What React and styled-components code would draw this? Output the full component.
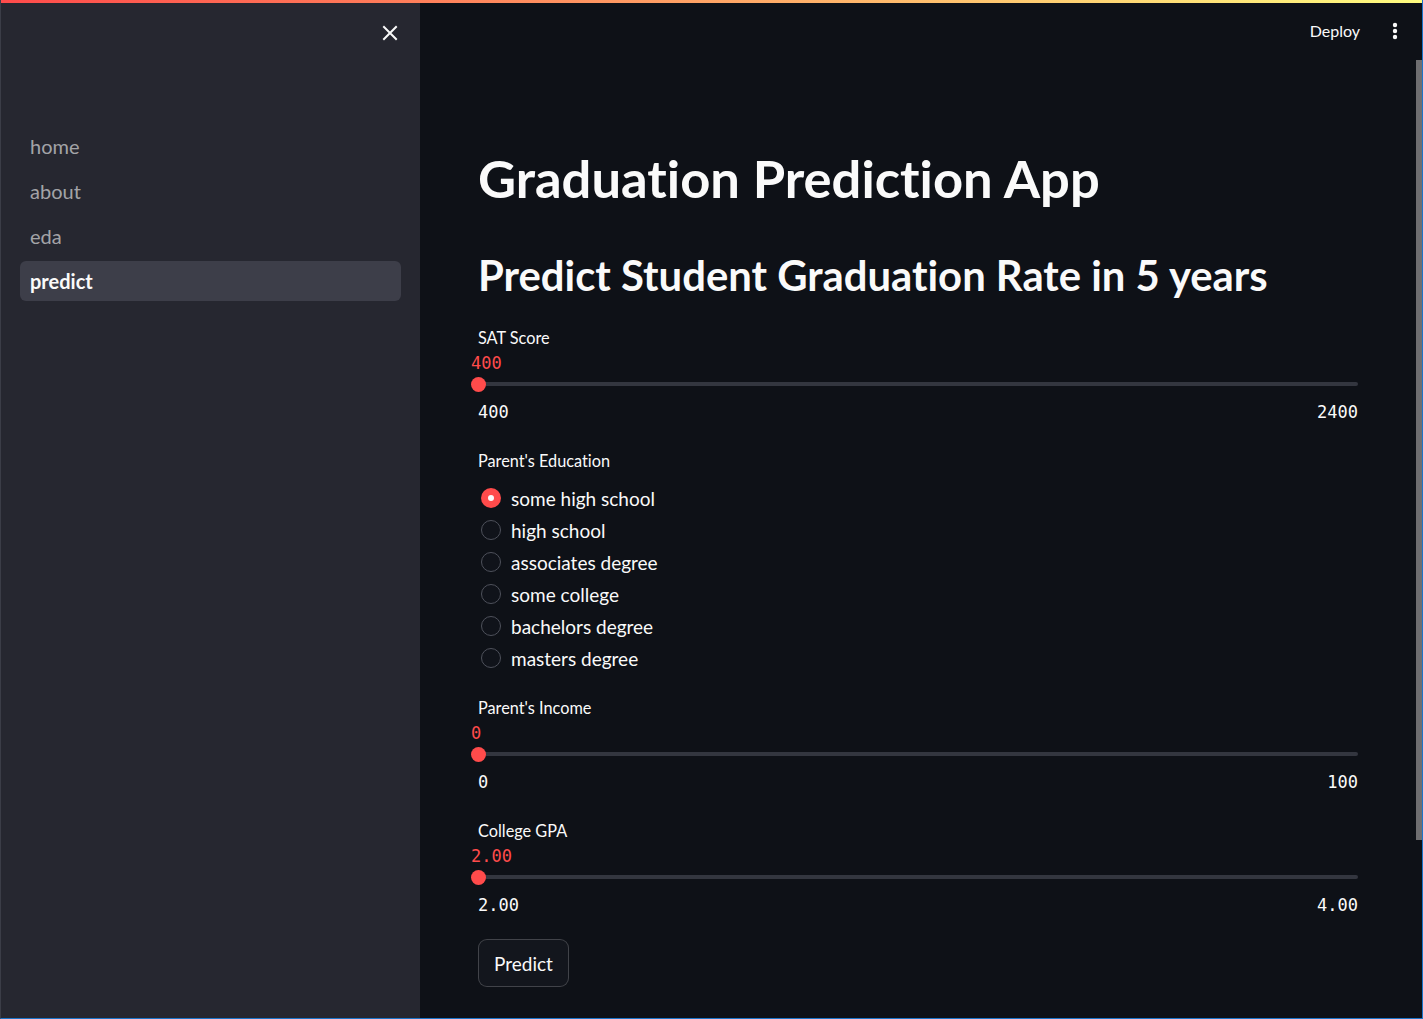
import React from 'react'
import styled, { createGlobalStyle } from 'styled-components'

const GlobalStyle = createGlobalStyle`
  html, body, #root {
    margin: 0;
    padding: 0;
    height: 100%;
  }
  body {
    background: #0e1117;
    font-family: Lato, "Noto Sans", sans-serif;
    font-variant-ligatures: none;
    color: #fafafa;
    overflow: hidden;
  }
`

const pages = ['home', 'about', 'eda', 'predict']
const educationOptions = [
  'some high school',
  'high school',
  'associates degree',
  'some college',
  'bachelors degree',
  'masters degree',
]

const CloseIcon = () => (
  <svg width="16" height="16" viewBox="0 0 16 16" fill="none">
    <path d="M2 2L14 14M14 2L2 14" stroke="#fafafa" strokeWidth="2" strokeLinecap="square" />
  </svg>
)

const KebabIcon = () => (
  <svg width="6" height="18" viewBox="0 0 6 18" fill="#fafafa">
    <circle cx="3" cy="3" r="2.2" />
    <circle cx="3" cy="9" r="2.2" />
    <circle cx="3" cy="15" r="2.2" />
  </svg>
)

const Slider = ({ label, value, min, max, spaced }) => (
  <SliderBlock $spaced={spaced}>
    <WidgetLabel>{label}</WidgetLabel>
    <ThumbValue>{value}</ThumbValue>
    <TrackArea>
      <Track />
      <Thumb />
    </TrackArea>
    <TickRow>
      <span>{min}</span>
      <span>{max}</span>
    </TickRow>
  </SliderBlock>
)

export default function App() {
  return (
    <Frame>
      <GlobalStyle />
      <Decoration />
      <Layout>
        <Sidebar>
          <SidebarHeader>
            <IconButton aria-label="close sidebar">
              <CloseIcon />
            </IconButton>
          </SidebarHeader>
          <Nav>
            {pages.map(p => (
              <NavItem key={p} $active={p === 'predict'}>{p}</NavItem>
            ))}
          </Nav>
        </Sidebar>

        <Main>
          <Header>
            <DeployButton>Deploy</DeployButton>
            <IconButton aria-label="menu">
              <KebabIcon />
            </IconButton>
          </Header>
          <Content>
            <Title>Graduation Prediction App</Title>
            <Subtitle>Predict Student Graduation Rate in 5 years</Subtitle>
            <Form>
              <Slider label="SAT Score" value="400" min="400" max="2400" spaced />
              <div>
                <WidgetLabel>Parent's Education</WidgetLabel>
                <RadioGroup>
                  {educationOptions.map((o, i) => (
                    <RadioRow key={o}>
                      <RadioCircle $checked={i === 0} />
                      <span>{o}</span>
                    </RadioRow>
                  ))}
                </RadioGroup>
              </div>
              <Slider label="Parent's Income" value="0" min="0" max="100" spaced />
              <Slider label="College GPA" value="2.00" min="2.00" max="4.00" />
              <div>
                <PredictButton>Predict</PredictButton>
              </div>
            </Form>
          </Content>
          <ScrollThumb />
        </Main>
      </Layout>
    </Frame>
  )
}

const Frame = styled.div`
  height: 1019px;
  display: flex;
  flex-direction: column;
  box-sizing: border-box;
  border-left: 1px solid #3b3d47;
  border-right: 1px solid #1b74c9;
  border-bottom: 1px solid #1b74c9;
  overflow: hidden;
`

const Decoration = styled.div`
  height: 3px;
  flex-shrink: 0;
  background: linear-gradient(90deg, #ff4b4b, #fffd80);
`

const Layout = styled.div`
  flex: 1;
  display: flex;
  min-height: 0;
`

const Sidebar = styled.aside`
  width: 419px;
  flex-shrink: 0;
  background: #262730;
  box-sizing: border-box;
  padding: 0 19px 0 19px;
`

const SidebarHeader = styled.div`
  height: 60px;
  display: flex;
  justify-content: flex-end;
  align-items: center;
  padding-right: 3px;
`

const IconButton = styled.button`
  background: none;
  border: none;
  padding: 0;
  display: flex;
  align-items: center;
  justify-content: center;
  cursor: pointer;
`

const Nav = styled.nav`
  margin-top: 63px;
  display: flex;
  flex-direction: column;
  gap: 5px;
`

const NavItem = styled.a`
  height: 40px;
  display: flex;
  align-items: center;
  padding: 0 10px 1px;
  box-sizing: border-box;
  border-radius: 6px;
  font-size: 20px;
  line-height: 38px;
  color: ${p => (p.$active ? '#fafafa' : 'rgba(250, 250, 250, 0.6)')};
  font-weight: ${p => (p.$active ? 700 : 400)};
  background: ${p => (p.$active ? '#3d3e49' : 'transparent')};
  cursor: pointer;
`

const Main = styled.main`
  flex: 1;
  position: relative;
  background: #0e1117;
  min-width: 0;
`

const Header = styled.header`
  height: 55px;
  display: flex;
  justify-content: flex-end;
  align-items: center;
  gap: 32px;
  padding-right: 24px;
`

const DeployButton = styled.button`
  background: none;
  border: none;
  color: #fafafa;
  font-family: inherit;
  font-size: 16px;
  padding: 0;
  cursor: pointer;
`

const Content = styled.div`
  width: 880px;
  margin-left: 58px;
  padding-top: 87px;
`

const Title = styled.h1`
  margin: 0;
  font-size: 52.5px;
  line-height: 66px;
  font-weight: 700;
`

const Subtitle = styled.h2`
  margin: 37px 0 0;
  font-size: 41.8px;
  line-height: 54px;
  font-weight: 700;
`

const Form = styled.div`
  margin-top: 24px;
  display: flex;
  flex-direction: column;
  gap: 22px;
`

const SliderBlock = styled.div`
  margin-bottom: ${p => (p.$spaced ? '3px' : '0')};
`

const WidgetLabel = styled.div`
  height: 24px;
  line-height: 24px;
  font-size: 16.3px;
  color: #fafafa;
`

const ThumbValue = styled.div`
  margin-top: 1px;
  margin-left: -7px;
  height: 24px;
  line-height: 24px;
  font-family: "DejaVu Sans Mono", monospace;
  font-size: 17px;
  color: #ff4b4b;
`

const TrackArea = styled.div`
  position: relative;
  height: 18px;
  display: flex;
  align-items: center;
`

const Track = styled.div`
  width: 100%;
  height: 4px;
  border-radius: 2px;
  background: #33363f;
`

const Thumb = styled.div`
  position: absolute;
  left: -7px;
  top: 1.5px;
  width: 15px;
  height: 15px;
  border-radius: 50%;
  background: #ff4b4b;
`

const TickRow = styled.div`
  margin-top: 7px;
  height: 24px;
  line-height: 24px;
  display: flex;
  justify-content: space-between;
  font-family: "DejaVu Sans Mono", monospace;
  font-size: 17px;
  color: #fafafa;
`

const RadioGroup = styled.div`
  margin-top: 9px;
  display: flex;
  flex-direction: column;
`

const RadioRow = styled.label`
  height: 32px;
  display: flex;
  align-items: center;
  gap: 10px;
  padding-left: 3px;
  font-size: 19px;
  cursor: pointer;
`

const RadioCircle = styled.span`
  width: 20px;
  height: 20px;
  box-sizing: border-box;
  border-radius: 50%;
  flex-shrink: 0;
  background: ${p => (p.$checked ? '#ff4b4b' : '#10131a')};
  border: ${p => (p.$checked ? 'none' : '1.5px solid #4e515b')};
  display: flex;
  align-items: center;
  justify-content: center;

  &::after {
    content: '';
    display: ${p => (p.$checked ? 'block' : 'none')};
    width: 6px;
    height: 6px;
    border-radius: 50%;
    background: #fafafa;
  }
`

const PredictButton = styled.button`
  height: 48px;
  padding: 0 15px;
  border-radius: 9px;
  border: 1px solid rgba(250, 250, 250, 0.2);
  background: #13161d;
  color: #fafafa;
  font-family: inherit;
  font-size: 19px;
  cursor: pointer;
`

const ScrollThumb = styled.div`
  position: absolute;
  right: 0;
  top: 57px;
  width: 6px;
  height: 780px;
  background: #6e6e70;
`
